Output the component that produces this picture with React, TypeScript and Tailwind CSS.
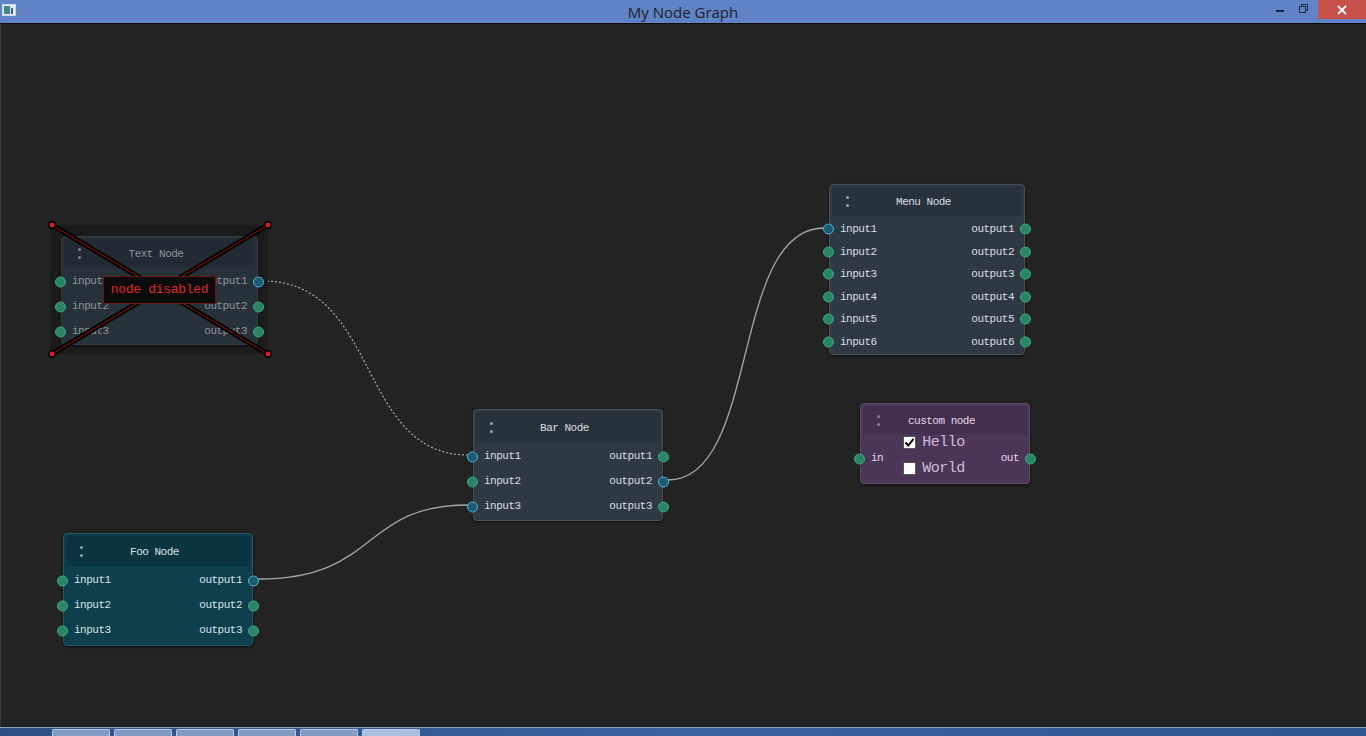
import React from 'react'

const mono = { fontFamily: '"Liberation Mono", "DejaVu Sans Mono", monospace' }

type PortKind = 'free' | 'linked'

function Port({ kind, side }: { kind: PortKind; side: 'left' | 'right' }) {
  const cls =
    kind === 'linked'
      ? 'bg-[#1d5a73] border-[#47bcd8]'
      : 'bg-[#2b8466] border-[#35b088]'
  return (
    <span
      className={`absolute top-1/2 -translate-y-1/2 w-[11px] h-[11px] rounded-full border-[1.5px] ${cls} ${
        side === 'left' ? 'left-[-9px]' : 'right-[-9px]'
      }`}
    />
  )
}

function Grip({ dim }: { dim?: boolean }) {
  return (
    <div className="flex flex-col gap-[5px] items-center">
      <span className={`w-[3px] h-[3px] rounded-full ${dim ? 'bg-[#7e8790]' : 'bg-[#9aa4ad]'}`} />
      <span className={`w-[3px] h-[3px] rounded-full ${dim ? 'bg-[#7e8790]' : 'bg-[#9aa4ad]'}`} />
    </div>
  )
}

type Row = { input: string; output: string; inKind?: PortKind; outKind?: PortKind }

function Node({
  title,
  rows,
  rowH,
  titleH,
  body,
  head,
  text,
  border,
  className,
  dim,
}: {
  title: string
  rows: Row[]
  rowH: string
  titleH: string
  body: string
  head: string
  text: string
  border: string
  className: string
  dim?: boolean
}) {
  return (
    <div className={`absolute rounded-[4px] border ${border} ${body} p-[2px] shadow-[0_1px_3px_rgba(0,0,0,0.6)] ${className}`} style={mono}>
      <div className={`${titleH} ${head} rounded-t-[3px] flex items-center px-[14px]`}>
        <Grip dim={dim} />
        <div className={`flex-1 text-center text-[11px] tracking-[-0.5px] pr-[10px] translate-y-[1px] ${text}`}>{title}</div>
      </div>
      <div className="flex flex-col pt-[2px]">
        {rows.map((r) => (
          <div key={r.input} className={`relative ${rowH} flex items-center justify-between px-[8px] text-[11px] tracking-[-0.5px] ${text}`}>
            <Port kind={r.inKind ?? 'free'} side="left" />
            <span>{r.input}</span>
            <span>{r.output}</span>
            <Port kind={r.outKind ?? 'free'} side="right" />
          </div>
        ))}
      </div>
    </div>
  )
}

function rows(n: number, linkedIn: number[] = [], linkedOut: number[] = []): Row[] {
  return Array.from({ length: n }, (_, i) => ({
    input: `input${i + 1}`,
    output: `output${i + 1}`,
    inKind: linkedIn.includes(i + 1) ? 'linked' : 'free',
    outKind: linkedOut.includes(i + 1) ? 'linked' : 'free',
  }))
}

function Wires() {
  return (
    <svg className="absolute inset-0 pointer-events-none" width="1366" height="736" viewBox="0 0 1366 736">
      <path d="M263 281 C 380 281, 357 455, 468 455" fill="none" stroke="#a9adaa" strokeWidth="1.2" strokeDasharray="2 2" />
      <path d="M258 579 C 380 579, 360 505, 468 505" fill="none" stroke="#9fa9a4" strokeWidth="1.3" />
      <path d="M668 480 C 760 480, 730 228, 824 228" fill="none" stroke="#9fa9a4" strokeWidth="1.3" />
    </svg>
  )
}

function DisabledCross() {
  return (
    <svg className="absolute inset-0 pointer-events-none" width="1366" height="736" viewBox="0 0 1366 736">
      <line x1="52" y1="225" x2="268" y2="354" stroke="#000" strokeWidth="5" />
      <line x1="268" y1="225" x2="52" y2="354" stroke="#000" strokeWidth="5" />
      <line x1="52" y1="225" x2="268" y2="354" stroke="#7a0b0b" strokeWidth="1.2" />
      <line x1="268" y1="225" x2="52" y2="354" stroke="#7a0b0b" strokeWidth="1.2" />
      {[
        [52, 225],
        [268, 225],
        [52, 354],
        [268, 354],
      ].map(([x, y]) => (
        <g key={`${x}-${y}`}>
          <circle cx={x} cy={y} r="4" fill="#000" />
          <circle cx={x} cy={y} r="2.4" fill="#e01824" />
        </g>
      ))}
    </svg>
  )
}

function Checkbox({ checked }: { checked?: boolean }) {
  return (
    <span className="w-[13px] h-[13px] bg-white border border-[#555] flex items-center justify-center">
      {checked && (
        <svg width="11" height="11" viewBox="0 0 11 11">
          <path d="M1.5 5.5 L4.3 8.5 L9.5 1.8" fill="none" stroke="#000" strokeWidth="2" />
        </svg>
      )}
    </span>
  )
}

export default function App() {
  return (
    <div className="w-[1366px] h-[736px] flex flex-col overflow-hidden bg-[#232323]" style={{ fontFamily: '"Liberation Sans", Arial, sans-serif' }}>
      {/* Window title bar */}
      <div className="h-[23px] bg-[#6083c8] relative flex items-center justify-center shrink-0">
        <div className="absolute left-[2px] top-[4px] w-[14px] h-[12px] bg-[#e9eef6] border border-[#c9d3e2] flex items-end p-[1px] gap-[1px]">
          <span className="w-[6px] h-[8px] bg-[#3f8a86]" />
          <span className="w-[2px] h-[6px] bg-[#506070]" />
        </div>
        <span className="text-[15px] text-[#222] mt-[1px]" style={{ fontFamily: '"Open Sans", "Liberation Sans", sans-serif' }}>
          My Node Graph
        </span>
        <div className="absolute right-0 top-0 flex items-start">
          <div className="w-[23px] h-[18px] flex items-center justify-center">
            <span className="w-[8px] h-[2px] bg-[#1d2a44] mt-[4px]" />
          </div>
          <div className="w-[26px] h-[18px] flex items-center justify-center relative">
            <span className="absolute left-[10px] top-[4px] w-[7px] h-[7px] border border-[#1d2a44]" />
            <span className="absolute left-[8px] top-[6px] w-[7px] h-[7px] border border-[#1d2a44] bg-[#6083c8]" />
          </div>
          <div className="w-[48px] h-[19px] bg-[#c7504a] flex items-center justify-center ml-[1px]">
            <svg width="10" height="10" viewBox="0 0 10 10">
              <path d="M1 1 L9 9 M9 1 L1 9" stroke="#fff" strokeWidth="1.8" />
            </svg>
          </div>
        </div>
      </div>

      {/* Graph canvas */}
      <div className="relative flex-1 border-t border-[#0c0c0c] border-l border-l-[#3a3a3a] bg-[#232323]">
        <div className="absolute left-[-1px] top-[-24px] w-[1366px] h-[736px]">
          <Wires />

          {/* Disabled text node */}
          <div className="absolute left-[50px] top-[225px] w-[218px] h-[129px] bg-[#1b1b1b]" />
          <Node
            title="Text Node"
            rows={rows(3, [], [1])}
            rowH="h-[25px]"
            titleH="h-[28px]"
            body="bg-[#27313a]"
            head="bg-[#222b33]"
            text="text-[#8d959c]"
            border="border-[#323c45]"
            className="left-[61px] top-[236px] w-[197px] h-[109px]"
            dim
          />
          <DisabledCross />
          <div
            className="absolute left-[103px] top-[276px] w-[113px] h-[28px] bg-[#0b0b0b] border border-[#6a1313] flex items-center justify-center text-[13px] text-[#e2222c] tracking-[-0.3px]"
            style={mono}
          >
            node disabled
          </div>

          <Node
            title="Bar Node"
            rows={rows(3, [1, 3], [2])}
            rowH="h-[25px]"
            titleH="h-[30px]"
            body="bg-[#2e3943]"
            head="bg-[#28323b]"
            text="text-[#d9dee2]"
            border="border-[#46505a]"
            className="left-[473px] top-[409px] w-[190px] h-[112px]"
          />

          <Node
            title="Menu Node"
            rows={rows(6, [1])}
            rowH="h-[22.5px]"
            titleH="h-[29px]"
            body="bg-[#2e3943]"
            head="bg-[#28323b]"
            text="text-[#d9dee2]"
            border="border-[#46505a]"
            className="left-[829px] top-[184px] w-[196px] h-[171px]"
          />

          <Node
            title="Foo Node"
            rows={rows(3, [], [1])}
            rowH="h-[25px]"
            titleH="h-[30px]"
            body="bg-[#0d404c]"
            head="bg-[#0a3540]"
            text="text-[#d9e3e6]"
            border="border-[#265663]"
            className="left-[63px] top-[533px] w-[190px] h-[113px]"
          />

          {/* Custom node */}
          <div
            className="absolute left-[860px] top-[403px] w-[170px] h-[81px] rounded-[4px] border border-[#5e4a68] bg-[#4b3658] p-[2px] shadow-[0_1px_3px_rgba(0,0,0,0.6)]"
            style={mono}
          >
            <div className="h-[28px] bg-[#42304e] rounded-t-[3px] flex items-center px-[14px]">
              <Grip dim />
              <div className="flex-1 text-center text-[11px] tracking-[-0.5px] text-[#e2d8e8] pr-[10px] translate-y-[1px]">custom node</div>
            </div>
            <div className="relative h-[49px] flex items-center justify-between px-[8px] text-[11px] tracking-[-0.5px] text-[#e2d8e8]">
              <span className="absolute left-[-9px] top-1/2 -translate-y-1/2 w-[11px] h-[11px] rounded-full border-[1.5px] bg-[#2b8466] border-[#35b088]" />
              <span>in</span>
              <div className="flex flex-col gap-[12px] -mt-[6px] mr-[16px]">
                <div className="flex items-center gap-[6px] text-[15px] text-[#cbbcd4] leading-[14px]">
                  <Checkbox checked />
                  <span>Hello</span>
                </div>
                <div className="flex items-center gap-[6px] text-[15px] text-[#cbbcd4] leading-[14px]">
                  <Checkbox />
                  <span>World</span>
                </div>
              </div>
              <span>out</span>
              <span className="absolute right-[-9px] top-1/2 -translate-y-1/2 w-[11px] h-[11px] rounded-full border-[1.5px] bg-[#2b8466] border-[#35b088]" />
            </div>
          </div>
        </div>
      </div>

      {/* Taskbar strip */}
      <div className="h-[9px] shrink-0 bg-gradient-to-r from-[#2c4f86] via-[#3b63a0] to-[#2f5590] border-t border-[#8aa0c0] flex items-end gap-[4px] pl-[52px]">
        {['#7f9bc4', '#7f9bc4', '#7f9bc4', '#7f9bc4', '#7f9bc4', '#a9bfe0'].map((c, i) => (
          <div key={i} className="w-[58px] h-[7px] rounded-t-[2px] border border-[#b9c8de] border-b-0" style={{ background: c }} />
        ))}
      </div>
    </div>
  )
}
